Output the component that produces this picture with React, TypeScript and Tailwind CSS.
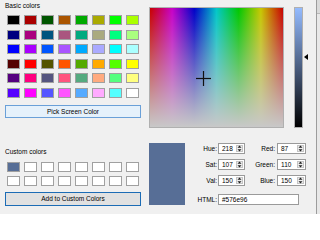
const basicColors = [
  ['#000000', '#aa0000', '#005500', '#aa5500', '#00aa00', '#aaaa00', '#00ff00', '#aaff00'],
  ['#00007f', '#aa007f', '#00557f', '#aa557f', '#00aa7f', '#aaaa7f', '#00ff7f', '#aaff7f'],
  ['#0000ff', '#aa00ff', '#0055ff', '#aa55ff', '#00aaff', '#aaaaff', '#00ffff', '#aaffff'],
  ['#550000', '#ff0000', '#555500', '#ff5500', '#55aa00', '#ffaa00', '#55ff00', '#ffff00'],
  ['#55007f', '#ff007f', '#55557f', '#ff557f', '#55aa7f', '#ffaa7f', '#55ff7f', '#ffff7f'],
  ['#5500ff', '#ff00ff', '#5555ff', '#ff55ff', '#55aaff', '#ffaaff', '#55ffff', '#ffffff'],
]

const customColors = ['#576e96', ...Array(15).fill('#ffffff')]

function Spin({ value, wide }: { value: string; wide?: boolean }) {
  return (
    <div className={wide ? 'flex h-[11px] w-[29px] border border-[#9a9a9a] bg-white' : 'flex h-[11px] w-[27px] border border-[#9a9a9a] bg-white'}>
      <span className="flex-1 pl-[3px] leading-[9px]">{value}</span>
      <div className="my-[1px] mr-[1px] flex w-[7px] items-center justify-center border border-[#c4c4c4] bg-[#eeeeee]">
        <svg width="5" height="7" viewBox="0 0 5 7">
          <polygon points="0.5,2.8 2.5,0.6 4.5,2.8" fill="#222" />
          <polygon points="0.5,4.2 2.5,6.4 4.5,4.2" fill="#222" />
        </svg>
      </div>
    </div>
  )
}

export default function App() {
  return (
    <div className="flex h-[214px] w-[320px] overflow-hidden bg-[#f0f0f0] font-['Liberation_Sans',Arial,sans-serif] text-[6.5px] text-black">

      {/* left: basic + custom colours */}
      <div className="flex w-[141px] shrink-0 flex-col pl-[5px]">
        <div className="mt-[1px] h-[10px] leading-[10px]">Basic colors</div>
        <div className="mt-[4px] grid grid-cols-[repeat(8,13px)] gap-x-[4px] gap-y-[4.6px] pl-[2px]">
          {basicColors.flat().map((c, i) => (
            <div key={i} className="h-[10px] border border-[#a0a0a0]" style={{ backgroundColor: c }} />
          ))}
        </div>
        <button className="mt-[7px] h-[13px] w-[136px] border border-[#6aa0d8] bg-[#e5f1fb] leading-[11px]">
          Pick Screen Color
        </button>

        <div className="mt-[29px] h-[10px] leading-[10px]">Custom colors</div>
        <div className="mt-[5px] grid grid-cols-[repeat(8,13px)] gap-x-[4px] gap-y-[4.3px] pl-[2px]">
          {customColors.map((c, i) => (
            <div key={i} className="h-[10px] border border-[#a0a0a0]" style={{ backgroundColor: c }} />
          ))}
        </div>
        <button className="mt-[5.7px] h-[14px] w-[136px] border border-[#1c6cb5] bg-[#e1e1e1] leading-[12px]">
          Add to Custom Colors
        </button>
      </div>

      {/* right: picker, luminance, values */}
      <div className="ml-[8px] flex w-[167px] shrink-0 flex-col pt-[7px]">
        <div className="flex">
          <div className="relative h-[121px] w-[135px] border border-[#b0b0b0] bg-[linear-gradient(to_right,#c80000,#c800c8,#0000c8,#00c8c8,#00c800,#c8c800,#c80000)]">
            <div className="h-full w-full bg-[linear-gradient(to_bottom,rgba(200,200,200,0),#c8c8c8)]" />
            <svg className="absolute left-[46px] top-[63px]" width="15" height="15" viewBox="0 0 15 15">
              <line x1="0" y1="7.5" x2="15" y2="7.5" stroke="#111" strokeWidth="1.2" />
              <line x1="7.5" y1="0" x2="7.5" y2="15" stroke="#111" strokeWidth="1.2" />
            </svg>
          </div>
          <div className="relative ml-[10px] h-[121px] w-[9px]">
            <div className="h-full w-full border border-[#b0b0b0] bg-[linear-gradient(to_bottom,#94bbff,#000000)]" />
            <svg className="absolute left-[10px] top-[47px]" width="4" height="6" viewBox="0 0 4 6">
              <polygon points="0,3 4,0 4,6" fill="#000" />
            </svg>
          </div>
        </div>

        <div className="mt-[15px] flex">
          <div className="h-[62px] w-[36px] bg-[#576e96]" />
          <div className="grid grid-cols-[33px_27px_32px_29px] items-center gap-y-[5.2px]">
            <span className="pr-[1px] text-right leading-[11px]">Hue:</span>
            <Spin value="218" />
            <span className="pr-[2px] text-right leading-[11px]">Red:</span>
            <Spin value="87" wide />

            <span className="pr-[1px] text-right leading-[11px]">Sat:</span>
            <Spin value="107" />
            <span className="pr-[2px] text-right leading-[11px]">Green:</span>
            <Spin value="110" wide />

            <span className="pr-[1px] text-right leading-[11px]">Val:</span>
            <Spin value="150" />
            <span className="pr-[2px] text-right leading-[11px]">Blue:</span>
            <Spin value="150" wide />

            <span className="mt-[2.4px] pr-[1px] text-right leading-[11px]">HTML:</span>
            <div className="col-span-3 mt-[2.4px] h-[11.5px] w-[81px] border border-[#9a9a9a] bg-white pl-[3px] leading-[9.5px]">
              #576e96
            </div>
          </div>
        </div>
      </div>

      {/* edge of the neighbouring window */}
      <div className="flex w-[4px] shrink-0 flex-col border-l border-[#9c9c9c] bg-[#e8e8e8]">
        <div className="h-[14px] border-b border-[#b8b8b8] bg-[#dadada]" />
      </div>
    </div>
  )
}
